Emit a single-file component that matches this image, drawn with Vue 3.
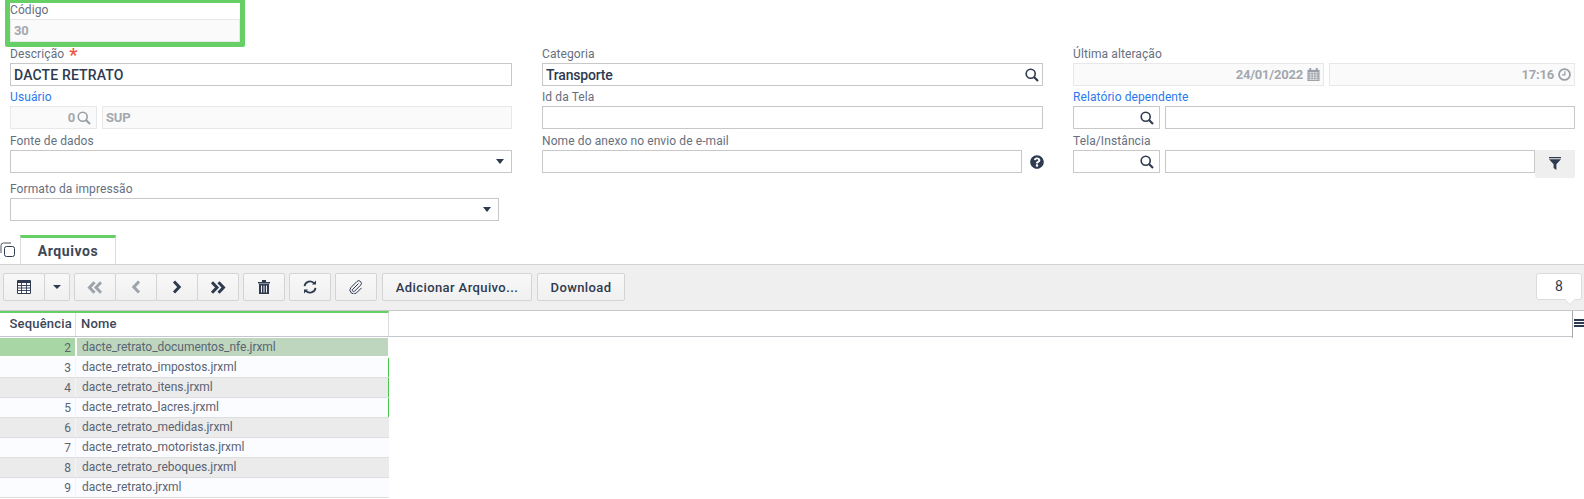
<script setup>
const files = [
  { seq: 2, name: 'dacte_retrato_documentos_nfe.jrxml', cls: 'selected' },
  { seq: 3, name: 'dacte_retrato_impostos.jrxml', cls: 'light mark' },
  { seq: 4, name: 'dacte_retrato_itens.jrxml', cls: 'dark mark' },
  { seq: 5, name: 'dacte_retrato_lacres.jrxml', cls: 'light mark' },
  { seq: 6, name: 'dacte_retrato_medidas.jrxml', cls: 'dark' },
  { seq: 7, name: 'dacte_retrato_motoristas.jrxml', cls: 'light' },
  { seq: 8, name: 'dacte_retrato_reboques.jrxml', cls: 'dark' },
  { seq: 9, name: 'dacte_retrato.jrxml', cls: 'light' }
]
const question = 'M504 256c0 136.997-111.043 248-248 248S8 392.997 8 256C8 119.083 119.043 8 256 8s248 111.083 248 248zM262.655 90c-54.497 0-89.255 22.957-116.549 63.758-3.536 5.286-2.353 12.415 2.715 16.258l34.699 26.31c5.205 3.947 12.621 3.008 16.665-2.122 17.864-22.658 30.113-35.797 57.303-35.797 20.429 0 45.698 13.148 45.698 32.958 0 14.976-12.363 22.667-32.534 33.976C247.128 238.528 216 254.941 216 296v4c0 6.627 5.373 12 12 12h56c6.627 0 12-5.373 12-12v-1.333c0-28.462 83.186-29.647 83.186-106.667 0-58.002-60.165-102-116.531-102zM256 338c-25.365 0-46 20.635-46 46 0 25.364 20.635 46 46 46s46-20.636 46-46c0-25.365-20.635-46-46-46z'
</script>

<template>
  <div class="page">
    <div class="code-block">
      <label class="lbl code-lbl">Código</label>
      <div class="inp off"><span class="val muted">30</span></div>
    </div>

    <div class="form">
      <div class="field">
        <label class="lbl">Descrição <span class="req">*</span></label>
        <div class="inp"><span class="val wide">DACTE RETRATO</span></div>
      </div>
      <div class="field">
        <label class="lbl">Categoria</label>
        <div class="inp">
          <span class="val tight">Transporte</span>
          <svg class="ico" viewBox="0 0 14 14"><circle cx="5.700" cy="5.700" r="4.500" /><path d="M9 9 13 13" class="thick" /></svg>
        </div>
      </div>
      <div class="field">
        <label class="lbl">Última alteração</label>
        <div class="pair">
          <div class="inp off end date">
            <span class="val muted">24/01/2022</span>
            <svg class="ico2" viewBox="0 0 13 14"><path d="M0 2h13v12H0z" fill="#9a9fa6" /><path d="M3 0v3M10 0v3" stroke="#9a9fa6" stroke-width="2" /><path d="M1 5h11M1 7.500h11M1 10h11M1 12.500h11M3.600 5v8M6.500 5v8M9.400 5v8" stroke="#e6e6e6" stroke-width=".8" /></svg>
          </div>
          <div class="inp off end grow">
            <span class="val muted">17:16</span>
            <svg class="ico2" viewBox="0 0 14 14"><circle cx="7" cy="7" r="5.900" fill="none" stroke="#9a9fa6" stroke-width="1.900" /><path d="M7.400 3.400v4H4.200" fill="none" stroke="#9a9fa6" stroke-width="1.400" /></svg>
          </div>
        </div>
      </div>

      <div class="field">
        <label class="lbl link">Usuário</label>
        <div class="pair">
          <div class="inp off end small">
            <span class="val muted">0</span>
            <svg class="ico grey" viewBox="0 0 14 14"><circle cx="5.700" cy="5.700" r="4.500" /><path d="M9 9 13 13" class="thick" /></svg>
          </div>
          <div class="inp off grow"><span class="val muted">SUP</span></div>
        </div>
      </div>
      <div class="field">
        <label class="lbl">Id da Tela</label>
        <div class="inp"></div>
      </div>
      <div class="field">
        <label class="lbl link">Relatório dependente</label>
        <div class="pair">
          <div class="inp end small">
            <svg class="ico" viewBox="0 0 14 14"><circle cx="5.700" cy="5.700" r="4.500" /><path d="M9 9 13 13" class="thick" /></svg>
          </div>
          <div class="inp grow"></div>
        </div>
      </div>

      <div class="field">
        <label class="lbl">Fonte de dados</label>
        <div class="inp end"><i class="caret"></i></div>
      </div>
      <div class="field">
        <label class="lbl">Nome do anexo no envio de e-mail</label>
        <div class="help-row">
          <div class="inp grow"></div>
          <svg class="help" viewBox="0 0 512 512"><path :d="question" fill="#2e3a50" /></svg>
        </div>
      </div>
      <div class="field">
        <label class="lbl">Tela/Instância</label>
        <div class="pair filter-row">
          <div class="inp end small">
            <svg class="ico" viewBox="0 0 14 14"><circle cx="5.700" cy="5.700" r="4.500" /><path d="M9 9 13 13" class="thick" /></svg>
          </div>
          <div class="inp grow"></div>
          <div class="filter">
            <svg viewBox="0 0 12 13" width="12" height="13"><path d="M0 0h12v1.300H0zM0 2.200h12L7.400 7.200V13L4.600 11V7.200z" fill="#2e3a50" /></svg>
          </div>
        </div>
      </div>

      <div class="field">
        <label class="lbl">Formato da impressão</label>
        <div class="inp end short"><i class="caret"></i></div>
      </div>
    </div>

    <div class="tabs">
      <svg class="copy" viewBox="0 0 15 15" fill="none" stroke="#4a5464"><path d="M1 11V3.500A2.500 2.500 0 0 1 3.500 1H11" /><rect x="4.500" y="4.500" width="10" height="10" rx="2" fill="#fff" stroke="#2e3a50" /></svg>
      <div class="tab">Arquivos</div>
    </div>

    <div class="toolbar">
      <div class="group">
        <button class="btn w42">
          <svg viewBox="0 0 14 14" width="14" height="14"><path d="M.5.500h13v13H.5z" fill="#fff" stroke="#2e3a50" /><path d="M.5 1h13v2H.5z" fill="#2e3a50" /><path d="M0 5.500h14M0 8h14M0 10.500h14M4.500 3v11M9.500 3v11" stroke="#2e3a50" stroke-width=".9" /></svg>
        </button>
        <button class="btn w26"><i class="caret small-caret"></i></button>
      </div>
      <div class="group">
        <button class="btn w42"><svg class="chev off-ic" viewBox="0 0 16 13" width="16" height="13"><path d="M7.500 1.200 2.500 6.500l5 5.300M14 1.200 9 6.500l5 5.300" /></svg></button>
        <button class="btn w42"><svg class="chev off-ic" viewBox="0 0 10 14" width="10" height="14"><path d="M8 1.500 2.800 7 8 12.500" /></svg></button>
        <button class="btn w42"><svg class="chev" viewBox="0 0 10 14" width="10" height="14"><path d="M2 1.500 7.200 7 2 12.500" /></svg></button>
        <button class="btn w42"><svg class="chev" viewBox="0 0 16 13" width="16" height="13"><path d="M2 1.200l5 5.300-5 5.300M8.500 1.200l5 5.300-5 5.300" /></svg></button>
      </div>
      <button class="btn w42">
        <svg viewBox="0 0 12 14" width="12" height="14"><path d="M0 2h12v1.400H0zM4 0h4v2H4zM1 4h10v10H1z" fill="#2e3a50" /><path d="M3.500 5.500v7M6 5.500v7M8.500 5.500v7" stroke="#f2f2f2" /></svg>
      </button>
      <button class="btn w42">
        <svg viewBox="0 0 14 14" width="14" height="14" fill="none" stroke="#2e3a50" stroke-width="1.800"><path d="M1.500 6.200A5.500 5.500 0 0 1 11.300 3.500" /><path d="M12.500 7.800A5.500 5.500 0 0 1 2.700 10.500" /><path d="M13 .6v4H9z" fill="#2e3a50" stroke="none" /><path d="M1 13.400v-4h4z" fill="#2e3a50" stroke="none" /></svg>
      </button>
      <button class="btn w42">
        <svg viewBox="0 0 14 14" width="14" height="14" fill="none" stroke="#2e3a50"><path d="M9.500 3.500 3.700 9.300a1.300 1.300 0 0 0 1.900 1.900l6-6a2.600 2.600 0 0 0-3.700-3.700L1.900 7.500a3.900 3.900 0 0 0 5.500 5.500l5.100-5.100" /></svg>
      </button>
      <button class="btn text add">Adicionar Arquivo...</button>
      <button class="btn text dl">Download</button>
      <div class="counter">8</div>
    </div>

    <div class="grid-head">
      <div class="cols">
        <div class="h-seq">Sequência</div>
        <div class="h-name">Nome</div>
      </div>
      <div class="filler"></div>
      <div class="menu"><i></i><i></i><i></i></div>
    </div>

    <div class="rows">
      <div v-for="f in files" :key="f.seq" class="row" :class="f.cls">
        <div class="seq">{{ f.seq }}</div>
        <div class="name">{{ f.name }}</div>
      </div>
    </div>
  </div>
</template>

<style scoped>
.page {
  width: 1584px;
  height: 499px;
  overflow: hidden;
  background: #fff;
  font-family: Roboto, "Liberation Sans", sans-serif;
  font-size: 12px;
  color: #2e3a50;
}
.code-block {
  box-sizing: border-box;
  width: 240px;
  height: 47px;
  margin-left: 5px;
  border-style: solid;
  border-color: #66cf66;
  border-width: 3px 5px 5px;
  border-radius: 0 0 2px 2px;
}
.form {
  display: grid;
  grid-template-columns: 502px 501px 502px;
  grid-template-rows: 39px 43px 44px 48px;
  column-gap: 30px;
  padding-left: 10px;
}
.field { align-self: end; min-width: 0; }
.lbl {
  display: block;
  height: 19px;
  line-height: 20px;
  color: #666f7e;
  white-space: nowrap;
  letter-spacing: .1px;
}
.lbl.code-lbl { height: 16px; line-height: 14px; }
.link { color: #2979ee; }
.req {
  color: #ee5a45;
  font-size: 18px;
  line-height: 12px;
  font-weight: 700;
  margin-left: 2px;
  vertical-align: -3px;
}
.inp {
  box-sizing: border-box;
  height: 23px;
  border: 1px solid #c8c8c8;
  background: #fff;
  display: flex;
  align-items: center;
  padding: 0 3px;
  justify-content: space-between;
}
.inp.off { background: #fafafa; border-color: #e8e8e8; }
.inp.end { justify-content: flex-end; }
.inp.small { width: 87px; flex: none; padding-right: 5px; }
.inp.short { width: 489px; }
.inp.date { width: 251px; flex: none; }
.grow { flex: 1; min-width: 0; }
.val { font-size: 14px; font-weight: 500; color: #2e3a50; white-space: nowrap; }
.val.wide { letter-spacing: .15px; }
.val.tight { letter-spacing: -.2px; }
.val.muted { font-size: 13px; letter-spacing: -.2px; color: #a3a8b0; font-weight: 700; }
.ico {
  width: 14px;
  height: 14px;
  flex: none;
  fill: none;
  stroke: #2e3a50;
  stroke-width: 1.600;
}
.ico .thick { stroke-width: 2.200; }
.ico.grey { stroke: #9a9fa6; margin-left: 2px; }
.ico2 { width: 13px; height: 13px; flex: none; margin-left: 4px; }
.pair { display: flex; gap: 5px; }
.help-row { display: flex; align-items: center; gap: 8px; }
.help { width: 14px; height: 14px; flex: none; margin-right: -1px; }
.filter-row { align-items: flex-start; }
.filter {
  width: 40px;
  height: 28px;
  flex: none;
  margin: 0 0 -5px -5px;
  background: #efefef;
  border-radius: 0 0 2px 2px;
  display: flex;
  justify-content: center;
  padding-top: 7px;
  box-sizing: border-box;
}
.caret {
  width: 0;
  height: 0;
  border-left: 4px solid transparent;
  border-right: 4px solid transparent;
  border-top: 5px solid #2e3a50;
  margin-right: 4px;
}
.small-caret { margin: 0; display: block; border-width: 4px 4px 0; }
.tabs {
  display: flex;
  height: 30px;
  margin-top: 14px;
  box-sizing: border-box;
  border-bottom: 1px solid #d2d2d2;
}
.copy { width: 15px; height: 15px; margin: 7px 5px 0 0; flex: none; }
.tab {
  box-sizing: border-box;
  width: 96px;
  height: 29px;
  border-top: 3px solid #66cf66;
  border-left: 1px solid #dcdcdc;
  border-right: 1px solid #dcdcdc;
  text-align: center;
  font-size: 14px;
  font-weight: 700;
  letter-spacing: .6px;
  line-height: 26px;
  color: #3d4758;
}
.toolbar {
  box-sizing: border-box;
  height: 46px;
  padding: 8px 3px 0;
  background: #efefef;
  border-bottom: 1px solid #c8c8c8;
  display: flex;
  gap: 4px;
  position: relative;
}
.group { display: flex; }
.group .btn + .btn { margin-left: -1px; }
.btn {
  box-sizing: border-box;
  height: 28px;
  padding: 0;
  border: 1px solid #d4d4d4;
  border-radius: 2px;
  background: linear-gradient(#f8f8f8, #f0f0f0);
  display: flex;
  align-items: center;
  justify-content: center;
  font-family: inherit;
  color: #2e3a50;
}
.w42 { width: 42px; }
.w26 { width: 26px; }
.text { font-size: 13px; font-weight: 500; letter-spacing: .4px; }
.add { width: 150px; margin-left: 1px; }
.dl { width: 88px; margin-left: 1px; }
.chev { fill: none; stroke: #2e3a50; stroke-width: 3; }
.chev.off-ic { stroke: #9ea3ab; }
.counter {
  box-sizing: border-box;
  position: absolute;
  left: 1536px;
  top: 8px;
  width: 46px;
  height: 27px;
  background: #fff;
  border: 1px solid #dcdcdc;
  border-radius: 3px;
  text-align: center;
  font-size: 14px;
  line-height: 25px;
}
.counter::after {
  content: "";
  position: absolute;
  left: 28px;
  top: 21px;
  width: 9px;
  height: 9px;
  background: #fff;
  border-right: 1px solid #dcdcdc;
  border-bottom: 1px solid #dcdcdc;
  transform: rotate(45deg) scale(.7);
}
.grid-head { display: flex; height: 27px; }
.cols {
  box-sizing: border-box;
  width: 389px;
  height: 26px;
  display: flex;
  border-top: 2px solid #66cf66;
  border-right: 1px solid #dcdcdc;
  border-bottom: 1px solid #c4c8cc;
  flex: none;
}
.h-seq {
  box-sizing: border-box;
  width: 76px;
  border-right: 1px solid #e0e0e0;
  text-align: right;
  padding-right: 3px;
  font-size: 13px;
  font-weight: 500;
  letter-spacing: .2px;
  line-height: 22px;
  color: #3d4758;
}
.h-name {
  padding-left: 5px;
  font-size: 13px;
  font-weight: 500;
  letter-spacing: .2px;
  line-height: 22px;
  color: #3d4758;
}
.filler {
  box-sizing: border-box;
  width: 1184px;
  height: 27px;
  flex: none;
  border-right: 1px solid #a8a8a8;
  background: linear-gradient(#fff 25px, #c4c8cc 25px, #c4c8cc 26px, #fff 26px);
}
.menu { width: 11px; margin-left: 1px; padding-top: 8px; display: flex; flex-direction: column; gap: 1px; flex: none; }
.menu i { display: block; height: 2px; background: #2e3a50; }
.rows { width: 389px; }
.row {
  box-sizing: border-box;
  height: 20px;
  display: flex;
  border-bottom: 1px solid #dedede;
  color: #5a6472;
}
.row.selected { height: 18px; margin-bottom: 2px; border-bottom: 0; }
.row.selected .seq { background: #a8d6a4; border-right: 1px solid #fff; width: 76px; }
.row.selected .name { background: #bed6be; border-left: 1px solid #fff; padding-left: 5px; margin-right: 1px; }
.row.light { background: #fbfcff; }
.row.dark { background: #ebebeb; }
.row.mark { box-shadow: inset -1px 0 0 #49c849; }
.seq {
  box-sizing: border-box;
  width: 76px;
  flex: none;
  border-right: 1px solid #f4f4f4;
  text-align: right;
  padding-right: 4px;
  line-height: 20px;
}
.name {
  box-sizing: border-box;
  flex: 1;
  padding-left: 6px;
  line-height: 18px;
  letter-spacing: -.03px;
  white-space: nowrap;
}
</style>
